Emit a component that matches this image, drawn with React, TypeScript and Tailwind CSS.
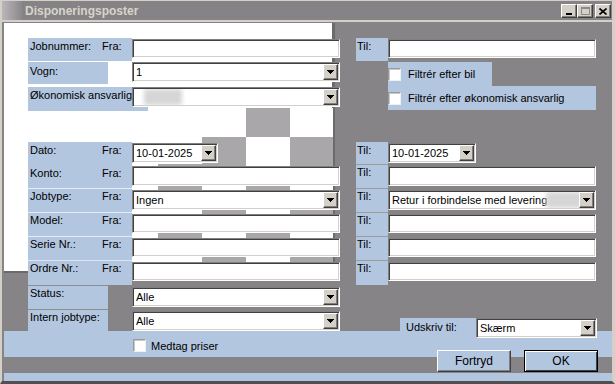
import React from "react";

const sunken =
  "border border-t-[#808080] border-l-[#808080] border-r-white border-b-white shadow-[inset_1px_1px_0_#404040,inset_-1px_-1px_0_#d4d0c8]";
const raised =
  "bg-[#d4d0c8] border border-t-white border-l-white border-r-[#404040] border-b-[#404040] shadow-[inset_-1px_-1px_0_#808080]";

const Arrow = () => (
  <div className={`${raised} w-[15px] h-[16px] shrink-0 flex items-center justify-center`}>
    <svg width="7" height="4" viewBox="0 0 7 4" shapeRendering="crispEdges">
      <path d="M0 0h7L3.5 4z" fill="#000" />
    </svg>
  </div>
);

const TextBox = ({ h = "h-[20px]" }: { h?: string }) => (
  <div className={`${sunken} bg-white w-[208px] ${h}`} />
);

const Combo = ({ w = "w-[208px]", children }: { w?: string; children?: React.ReactNode }) => (
  <div className={`${sunken} bg-white h-[20px] ${w} flex items-center pl-[3px] pr-[1px]`}>
    <div className="flex-1 flex items-center overflow-hidden whitespace-nowrap">{children}</div>
    <Arrow />
  </div>
);

const Blur = ({ ml = "ml-[8px]" }: { ml?: string }) => (
  <span className={`${ml} w-[38px] h-[16px] bg-[#d6d6d6] blur-[2px] shrink-0`} />
);

const Check = () => (
  <div className="w-[13px] h-[13px] bg-white border border-t-[#9a9a9a] border-l-[#9a9a9a] border-r-[#f0f0f0] border-b-[#f0f0f0] shadow-[inset_1px_1px_0_#c8c8c8] shrink-0" />
);

const TitleBtn = ({ children }: { children: React.ReactNode }) => (
  <div className={`${raised} w-[16px] h-[14px] flex items-center justify-center`}>{children}</div>
);

const blue = "bg-[#b3c6df]";

const FraRow = ({ label, top = "border-t border-t-[#e6ecf4]", h = "h-[24px]", children, right }: any) => (
  <div className={`flex ${h}`}>
    <div className={`${blue} ${top} w-[104px] flex pl-[2px] pt-[1px]`}>
      <span className="w-[72px]">{label}</span>
      <span>Fra:</span>
    </div>
    <div className="mt-[2px]">{children}</div>
    <div className="w-[16px]" />
    <div className={`${blue} border-t border-t-[#9c9c9c] w-[32px] pl-[1px] pt-[1px]`}>Til:</div>
    <div className="mt-[2px]">{right}</div>
  </div>
);

export default function App() {
  return (
    <div className="w-[615px] h-[384px] bg-[#868486] border-t border-l-2 border-r-[3px] border-[#d4d0c8] border-b-[3px] border-b-[#505050] flex flex-col overflow-hidden font-['Liberation_Sans',Arial,sans-serif] text-[11px] leading-[13px] text-black">
      {/* title bar */}
      <div className="h-[19px] flex items-start bg-[#858385] shrink-0">
        <div className="w-[20px] h-[19px] bg-gradient-to-r from-[#b9b7b9] to-[#8a888a]" />
        <div className="pl-[3px] pt-[4px] font-bold text-[12px] leading-[13px] text-[#d8d4cc]">Disponeringsposter</div>
        <div className="ml-auto flex pt-[3px] pr-[1px]">
          <TitleBtn>
            <div className="w-[6px] h-[2px] bg-black mt-[6px] -ml-[1px]" />
          </TitleBtn>
          <TitleBtn>
            <div className="w-[9px] h-[8px] border border-t-2 border-[#8a8a8a]" />
          </TitleBtn>
          <div className="w-[2px]" />
          <TitleBtn>
            <svg width="8" height="7" viewBox="0 0 8 7">
              <path d="M0.5 0.5L7.5 6.5M7.5 0.5L0.5 6.5" stroke="#000" strokeWidth="1.6" />
            </svg>
          </TitleBtn>
        </div>
      </div>
      <div className="h-[2px] bg-[#d4d0c8] shrink-0" />

      {/* client area */}
      <div className="relative flex-1 flex flex-col">
        {/* stale white panel behind the form */}
        <div className="absolute z-0 left-[2px] top-[1px] w-[331px] h-[250px] bg-white border-r-[3px] border-b-2 border-[#6c6a6c]">
          <div className="absolute left-[198px] top-[85px] w-[131px] h-[163px] bg-[repeating-conic-gradient(#a9a7a9_0_25%,#ffffff_0_50%)] bg-[length:88px_58px] bg-[position:0_0]" />
          <div className="absolute left-[154px] top-[141px] w-[44px] h-[107px] bg-[repeating-linear-gradient(#a9a7a9_0_29px,#ffffff_29px_58px)]" />
        </div>

        <div className="relative z-10 flex flex-col pt-[16px] pl-[26px]">
          {/* Jobnummer */}
          <div className="flex h-[24px]">
            <div className={`${blue} w-[104px] h-[23px] flex pl-[2px] pt-[2px]`}>
              <span className="w-[72px]">Jobnummer:</span>
              <span>Fra:</span>
            </div>
            <div className="mt-[1px]">
              <TextBox h="h-[19px]" />
            </div>
            <div className="w-[16px]" />
            <div className={`${blue} w-[32px] h-[23px] pl-[1px] pt-[2px]`}>Til:</div>
            <div className="mt-[1px]">
              <TextBox h="h-[19px]" />
            </div>
          </div>
          {/* Vogn */}
          <div className="flex h-[24px]">
            <div className={`${blue} w-[80px] h-[22px] pl-[2px] pt-[3px]`}>Vogn:</div>
            <div className="w-[24px]" />
            <Combo>
              <span>1</span>
            </Combo>
            <div className="w-[48px]" />
            <div className={`${blue} w-[104px] h-[24px] flex items-center gap-[7px]`}>
              <Check />
              <span>Filtrér efter bil</span>
            </div>
          </div>
          {/* Økonomisk ansvarlig */}
          <div className="flex h-[24px]">
            <div className={`${blue} w-[120px] h-[24px] mt-[1px] pl-[2px] pt-[2px] overflow-hidden whitespace-nowrap`}>
              Økonomisk ansvarlig
            </div>
            <div className="-ml-[16px] mt-[1px]">
              <Combo>
                <Blur />
              </Combo>
            </div>
            <div className="w-[48px]" />
            <div className={`${blue} w-[208px] h-[24px] flex items-center gap-[7px]`}>
              <Check />
              <span>Filtrér efter økonomisk ansvarlig</span>
            </div>
          </div>

          <div className="h-[32px]" />

          {/* Dato */}
          <div className="flex h-[22px]">
            <div className={`${blue} w-[104px] flex pl-[2px] pt-[2px]`}>
              <span className="w-[72px]">Dato:</span>
              <span>Fra:</span>
            </div>
            <div className="mt-[1px]">
              <Combo w="w-[86px]">
                <span>10-01-2025</span>
              </Combo>
            </div>
            <div className="w-[138px]" />
            <div className={`${blue} w-[32px] pl-[1px] pt-[2px]`}>Til:</div>
            <div className="mt-[1px]">
              <Combo w="w-[88px]">
                <span>10-01-2025</span>
              </Combo>
            </div>
          </div>

          <FraRow label="Konto:" top="border-t-2 border-t-[#b3c6df]" right={<TextBox />}>
            <TextBox />
          </FraRow>
          <FraRow
            label="Jobtype:"
            right={
              <Combo>
                <span>Retur i forbindelse med levering</span>
                <Blur ml="ml-[-1px]" />
              </Combo>
            }
          >
            <Combo>
              <span>Ingen</span>
            </Combo>
          </FraRow>
          <FraRow label="Model:" right={<TextBox h="h-[19px]" />}>
            <TextBox h="h-[19px]" />
          </FraRow>
          <FraRow label="Serie Nr.:" right={<TextBox h="h-[19px]" />}>
            <TextBox h="h-[19px]" />
          </FraRow>
          <FraRow label="Ordre Nr.:" h="h-[25px]" top="border-t border-t-[#dfe6ef]" right={<TextBox h="h-[19px]" />}>
            <TextBox h="h-[19px]" />
          </FraRow>

          {/* Status */}
          <div className="flex h-[24px]">
            <div className={`${blue} w-[80px] border-t border-t-[#8e8e8e] pl-[2px] pt-[1px]`}>Status:</div>
            <div className="w-[24px]" />
            <div className="mt-[2px]">
              <Combo>
                <span>Alle</span>
              </Combo>
            </div>
          </div>
          {/* Intern jobtype */}
          <div className="flex h-[22px]">
            <div className={`${blue} w-[80px] border-t border-t-[#8e8e8e] pl-[2px] pt-[1px]`}>Intern jobtype:</div>
            <div className="w-[24px]" />
            <div className="mt-[2px]">
              <Combo>
                <span>Alle</span>
              </Combo>
            </div>
          </div>
        </div>

        {/* bottom band */}
        <div className={`relative z-10 ${blue} h-[26px] flex ml-[2px]`}>
          <div className="ml-[129px] pt-[8px] flex items-start gap-[5px]">
            <Check />
            <span className="pt-[1px]">Medtag priser</span>
          </div>
          <div className="ml-auto mr-[15px] -mt-[13px] flex items-start">
            <div className={`${blue} w-[76px] h-[22px] pl-[6px] pt-[3px]`}>Udskriv til:</div>
            <Combo w="w-[121px]">
              <span>Skærm</span>
            </Combo>
          </div>
        </div>
        <div className="relative z-10 h-[16px] flex justify-end pr-[14px] gap-[13px]">
          <button className={`-mt-[7px] w-[74px] h-[22px] ${blue} border border-t-white border-l-white border-r-[#404040] border-b-[#404040] shadow-[inset_-1px_-1px_0_#808080] text-[12px]`}>
            Fortryd
          </button>
          <button className={`-mt-[7px] w-[74px] h-[22px] ${blue} border border-black shadow-[inset_1px_1px_0_#ffffff,inset_-1px_-1px_0_#404040] text-[12px]`}>
            OK
          </button>
        </div>
        <div className={`${blue} h-[8px] ml-[2px]`} />
      </div>
    </div>
  );
}
